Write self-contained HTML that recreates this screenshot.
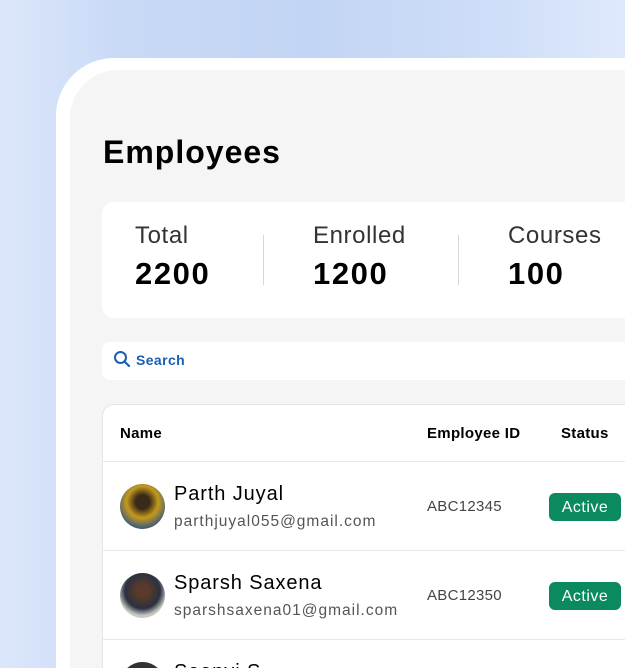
<!DOCTYPE html>
<html><head><style>
*{margin:0;padding:0;box-sizing:border-box}
html,body{width:625px;height:668px;overflow:hidden}
body{position:relative;font-family:"Liberation Sans",sans-serif;background:linear-gradient(90deg,#dce7fb 0%,#c8d9f6 20%,#c2d5f4 50%,#cfdef8 80%,#dfe9fc 100%)}
.frame{position:absolute;left:56px;top:58px;width:569px;height:610px;background:#fff;border-radius:58px 0 0 0}
.panel{position:absolute;left:70px;top:70px;width:555px;height:598px;background:#f5f5f5;border-radius:48px 0 0 0}
h1{position:absolute;left:103px;top:134px;font-size:32px;font-weight:bold;color:#000;letter-spacing:1px}
.stats{position:absolute;left:102px;top:202px;width:523px;height:116px;background:#fff;border-radius:12px 0 0 12px}
.st{position:absolute;top:20px}
.st .l{font-size:24px;color:#333;letter-spacing:0.6px}
.st .v{font-size:31px;font-weight:bold;color:#000;margin-top:6px;letter-spacing:1.6px}
.div{position:absolute;top:33px;width:1px;height:50px;background:#d8d8d8}
.search{position:absolute;left:102px;top:342px;width:523px;height:38px;background:#fff;border-radius:8px 0 0 8px}
.search span{position:absolute;left:34px;top:10px;font-size:14px;font-weight:bold;color:#1a5fb4;letter-spacing:0.4px}
.tbl{position:absolute;left:102px;top:404px;width:523px;height:264px;background:#fff;border:1px solid #e4e4e4;border-right:none;border-bottom:none;border-radius:12px 0 0 0;overflow:hidden}
.hdr{position:absolute;top:20px;font-size:15px;font-weight:bold;color:#000;letter-spacing:0.3px}
.row{position:absolute;left:0;width:523px;height:89px;border-top:1px solid #e8e8e8}
.av{position:absolute;left:17px;top:22px;width:45px;height:45px;border-radius:50%}
.nm{position:absolute;left:71px;top:21px;font-size:20px;color:#000;letter-spacing:0.9px}
.em{position:absolute;left:71px;top:51px;font-size:15.5px;color:#555;letter-spacing:1px}
.id{position:absolute;left:324px;top:36px;font-size:15px;color:#444;letter-spacing:0.3px}
.badge{position:absolute;left:446px;top:31px;width:72px;height:28px;background:#0b8a5f;border-radius:6px;color:#fff;font-size:16px;text-align:center;line-height:29px;letter-spacing:0.5px}
</style></head><body>
<div class="frame"></div>
<div class="panel"></div>
<h1>Employees</h1>
<div class="stats">
<div class="st" style="left:33px"><div class="l">Total</div><div class="v">2200</div></div>
<div class="div" style="left:161px"></div>
<div class="st" style="left:211px"><div class="l">Enrolled</div><div class="v">1200</div></div>
<div class="div" style="left:356px"></div>
<div class="st" style="left:406px"><div class="l">Courses</div><div class="v">100</div></div>
</div>
<div class="search"><svg style="position:absolute;left:11px;top:8px" width="18" height="18" viewBox="0 0 18 18"><circle cx="7.5" cy="7.5" r="5.5" fill="none" stroke="#1a5fb4" stroke-width="2"/><path d="M11.5 11.5L16 16" stroke="#1a5fb4" stroke-width="2.2" stroke-linecap="round"/></svg><span>Search</span></div>
<div class="tbl">
<div class="hdr" style="left:17px">Name</div>
<div class="hdr" style="left:324px">Employee ID</div>
<div class="hdr" style="left:458px">Status</div>
<div class="row" style="top:56px">
<div class="av" style="background:radial-gradient(circle at 50% 40%,#3a2a1a 20%,#c49a1c 45%,#3f5a7a 75%)"></div>
<div class="nm">Parth Juyal</div><div class="em">parthjuyal055@gmail.com</div>
<div class="id">ABC12345</div><div class="badge">Active</div></div>
<div class="row" style="top:145px">
<div class="av" style="background:radial-gradient(circle at 50% 40%,#5a3a2a 18%,#2a3140 50%,#c9c9c4 70%)"></div>
<div class="nm">Sparsh Saxena</div><div class="em">sparshsaxena01@gmail.com</div>
<div class="id">ABC12350</div><div class="badge">Active</div></div>
<div class="row" style="top:234px;height:30px">
<div class="av" style="background:#333"></div>
<div class="nm">Saanvi S</div></div>
</div>
</body></html>
